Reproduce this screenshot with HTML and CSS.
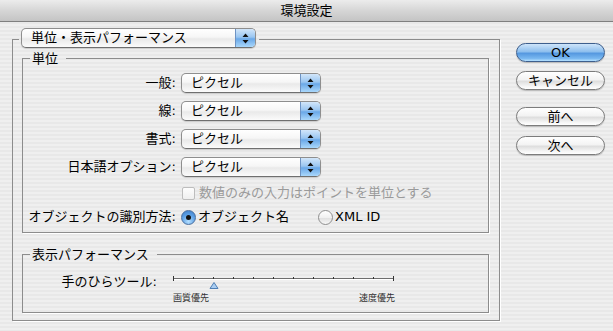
FILE: index.html
```html
<!DOCTYPE html>
<html lang="ja">
<head>
    <meta charset="UTF-8">
    <title>環境設定</title>
    <link rel="stylesheet" href="styles.css">
</head>
<body>
    <div class="titlebar">環境設定</div>

    <div class="dialog">
        <fieldset class="panel">
            <legend class="panel-legend">
                <div class="popup popup-wide">
                    <span class="popup-text">単位・表示パフォーマンス</span>
                    <span class="popup-arrows">
                        <svg width="7" height="11" viewBox="0 0 7 11"><path d="M3.5 0.5 L6.5 4 L0.5 4 Z M0.5 7 L6.5 7 L3.5 10.5 Z" fill="#111"/></svg>
                    </span>
                </div>
            </legend>

            <fieldset class="group group-units">
                <legend class="group-legend">単位</legend>
                <div class="form">
                    <span class="lbl">一般:</span>
                    <div class="popup">
                        <span class="popup-text">ピクセル</span>
                        <span class="popup-arrows"><svg width="7" height="11" viewBox="0 0 7 11"><path d="M3.5 0.5 L6.5 4 L0.5 4 Z M0.5 7 L6.5 7 L3.5 10.5 Z" fill="#111"/></svg></span>
                    </div>

                    <span class="lbl">線:</span>
                    <div class="popup">
                        <span class="popup-text">ピクセル</span>
                        <span class="popup-arrows"><svg width="7" height="11" viewBox="0 0 7 11"><path d="M3.5 0.5 L6.5 4 L0.5 4 Z M0.5 7 L6.5 7 L3.5 10.5 Z" fill="#111"/></svg></span>
                    </div>

                    <span class="lbl">書式:</span>
                    <div class="popup">
                        <span class="popup-text">ピクセル</span>
                        <span class="popup-arrows"><svg width="7" height="11" viewBox="0 0 7 11"><path d="M3.5 0.5 L6.5 4 L0.5 4 Z M0.5 7 L6.5 7 L3.5 10.5 Z" fill="#111"/></svg></span>
                    </div>

                    <span class="lbl">日本語オプション:</span>
                    <div class="popup">
                        <span class="popup-text">ピクセル</span>
                        <span class="popup-arrows"><svg width="7" height="11" viewBox="0 0 7 11"><path d="M3.5 0.5 L6.5 4 L0.5 4 Z M0.5 7 L6.5 7 L3.5 10.5 Z" fill="#111"/></svg></span>
                    </div>

                    <span></span>
                    <div class="check disabled">
                        <span class="check-box"></span>
                        <span>数値のみの入力はポイントを単位とする</span>
                    </div>

                    <span class="lbl">オブジェクトの識別方法:</span>
                    <div class="radios">
                        <div class="radio-item radio-first">
                            <span class="radio checked"></span>
                            <span>オブジェクト名</span>
                        </div>
                        <div class="radio-item">
                            <span class="radio"></span>
                            <span>XML ID</span>
                        </div>
                    </div>
                </div>
            </fieldset>

            <fieldset class="group group-perf">
                <legend class="group-legend">表示パフォーマンス</legend>
                <div class="slider-row">
                    <span class="lbl slider-lbl">手のひらツール:</span>
                    <div class="slider">
                        <svg width="222" height="20" viewBox="0 0 222 20">
                            <line x1="0.5" y1="6.5" x2="220.5" y2="6.5" stroke="#6e6e6e"/>
                            <line x1="0.5" y1="7.5" x2="220.5" y2="7.5" stroke="#ffffff"/>
                            <path d="M0.5 4 V9 M20.5 5 V7 M40.5 5 V7 M60.5 5 V7 M80.5 5 V7 M100.5 5 V7 M120.5 5 V7 M140.5 5 V7 M160.5 5 V7 M180.5 5 V7 M200.5 5 V7 M220.5 4 V9" stroke="#333"/>
                            <path d="M41 10.5 L45 16.5 L37 16.5 Z" fill="#a9cdf2" stroke="#4f7fb5"/>
                        </svg>
                        <div class="slider-marks">
                            <span>画質優先</span>
                            <span>速度優先</span>
                        </div>
                    </div>
                </div>
            </fieldset>
        </fieldset>

        <div class="buttons">
            <button class="btn btn-default">OK</button>
            <button class="btn btn-cancel">キャンセル</button>
            <button class="btn btn-prev">前へ</button>
            <button class="btn">次へ</button>
        </div>
    </div>
</body>
</html>
```

FILE: styles.css
```css
:root {
    --stripe-light: #efefef;
    --stripe-dark: #e8e8e8;
    --group-line: #8c8c8c;
    --text-color: #000;
    --disabled-text: #9a9a9a;
    --gel-border: #8e8e8e;
    --blue-border: #4a6f9f;
}

* {
    box-sizing: border-box;
}

body {
    margin: 0;
    width: 613px;
    height: 331px;
    overflow: hidden;
    font-family: "DejaVu Sans", "Noto Sans CJK JP", sans-serif;
    font-size: 13px;
    color: var(--text-color);
    background: repeating-linear-gradient(var(--stripe-light) 0 2px, var(--stripe-dark) 2px 4px);
}

.titlebar {
    height: 22px;
    line-height: 21px;
    text-align: center;
    background: linear-gradient(#ececec, #d6d6d6 50%, #c4c4c4);
    border-bottom: 1px solid #7f7f7f;
}

.dialog {
    display: flex;
    align-items: flex-start;
    padding: 6px 0 0 12px;
}

/* group boxes */

.panel,
.group {
    margin: 0;
    min-width: 0;
    border: 1px solid var(--group-line);
    box-shadow: 1px 1px 0 #fff;
}

.panel {
    width: 488px;
    padding: 1px 10px 7px 9px;
}

.panel-legend {
    margin-left: -3px;
    padding: 0 3px 2px 2px;
}

.group {
    padding: 7px 0 7px 7px;
}

.group-legend {
    padding: 0 8px 0 2px;
    line-height: 15px;
}

.group-perf {
    margin-top: 14px;
    padding-top: 10px;
    padding-bottom: 8px;
}

/* popups */

.popup {
    display: flex;
    width: 140px;
    height: 20px;
    border: 1px solid var(--gel-border);
    border-bottom-color: #6f6f6f;
    border-radius: 5px;
    overflow: hidden;
    background: linear-gradient(#ffffff, #f6f6f6 45%, #e9e9e9 55%, #fbfbfb);
    box-shadow: 0 1px 1px rgba(0, 0, 0, 0.15);
}

.popup-wide {
    width: 235px;
}

.popup-text {
    flex: 1;
    padding-left: 9px;
    line-height: 18px;
    white-space: nowrap;
}

.popup-arrows {
    display: flex;
    align-items: center;
    justify-content: center;
    width: 20px;
    border-left: 1px solid #6d93c4;
    background: linear-gradient(#d2e6fa, #9ac6f1 45%, #6aa8e8 55%, #a9d7fb);
}

/* units form */

.form {
    display: grid;
    grid-template-columns: 146px auto;
    grid-template-rows: 20px 20px 20px 20px 16px 16px;
    column-gap: 5px;
    row-gap: 8px;
    align-items: center;
}

.lbl {
    justify-self: end;
    white-space: nowrap;
    line-height: 16px;
}

.form .popup {
    justify-self: start;
}

.check {
    display: flex;
    align-items: center;
    gap: 4px;
    padding-left: 1px;
    line-height: 16px;
}

.check.disabled {
    color: var(--disabled-text);
}

.check-box {
    width: 13px;
    height: 13px;
    border: 1px solid #bdbdbd;
    border-radius: 2px;
    background: linear-gradient(#fdfdfd, #efefef);
}

.radios {
    display: flex;
    align-items: center;
    line-height: 16px;
}

.radio-item {
    display: flex;
    align-items: center;
    gap: 2px;
}

.radio-first {
    margin-right: 29px;
}

.radio {
    position: relative;
    width: 15px;
    height: 15px;
    border: 1px solid var(--gel-border);
    border-radius: 50%;
    background: linear-gradient(#ffffff, #f1f1f1 50%, #e0e0e0 55%, #f7f7f7);
}

.radio.checked {
    border-color: var(--blue-border);
    background: radial-gradient(circle at 50% 80%, #b6e0ff, #5c9fe4 55%, #3b7cc8);
}

.radio.checked::after {
    content: "";
    position: absolute;
    left: 4px;
    top: 4px;
    width: 5px;
    height: 5px;
    border-radius: 50%;
    background: #111;
}

/* hand tool slider */

.slider-row {
    display: flex;
    align-items: flex-start;
}

.slider-lbl {
    width: 127px;
    margin-top: 2px;
    text-align: right;
}

.slider {
    margin-left: 16px;
    width: 222px;
}

.slider svg {
    display: block;
}

.slider-marks {
    display: flex;
    justify-content: space-between;
    font-size: 9px;
    line-height: 12px;
    color: #333;
}

/* buttons */

.buttons {
    display: flex;
    flex-direction: column;
    margin: 15px 0 0 16px;
}

.btn {
    width: 89px;
    height: 19px;
    padding: 0;
    font: inherit;
    line-height: 17px;
    color: #000;
    border: 1px solid #7c7c7c;
    border-radius: 10px;
    background: linear-gradient(#ffffff, #f3f3f3 45%, #dedede 55%, #f6f6f6 85%, #ffffff);
    box-shadow: 0 1px 1px rgba(0, 0, 0, 0.2);
}

.btn-default {
    border-color: #3e5f8d;
    background: linear-gradient(#cfe5fa, #8ebfee 45%, #5598e0 55%, #79b8f0 85%, #b7e2ff);
}

.btn-cancel {
    margin-top: 9px;
}

.btn-prev {
    margin-top: 17px;
    margin-bottom: 10px;
}
```
